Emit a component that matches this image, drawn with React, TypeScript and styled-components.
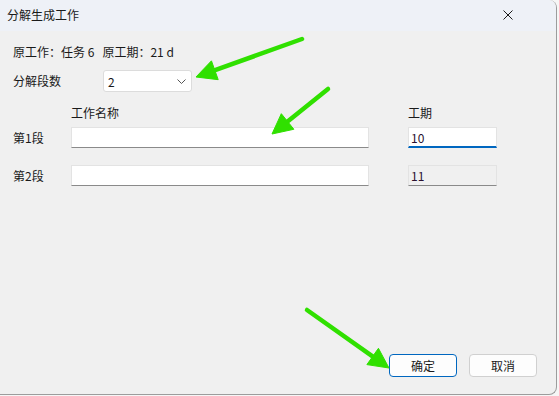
import styled, { createGlobalStyle } from 'styled-components';

const GlobalStyle = createGlobalStyle`
  html, body {
    margin: 0;
    padding: 0;
    background: #f6f6f6;
  }
  body {
    font-family: "Noto Sans CJK SC", "Noto Sans", sans-serif;
    font-size: 12px;
    color: #1a1a1a;
  }
`;

const StyledWindow = styled.div`
  position: relative;
  display: flex;
  flex-direction: column;
  width: 557px;
  height: 395px;
  box-sizing: border-box;
  background: #f0f0f0;
  border-right: 1px solid #9c9c9c;
  border-bottom: 1px solid #9c9c9c;
  border-top-right-radius: 8px;
  border-bottom-right-radius: 8px;
  overflow: hidden;
`;

const StyledTitleBar = styled.div`
  display: flex;
  align-items: center;
  justify-content: space-between;
  height: 31px;
  flex-shrink: 0;
  padding: 0 43px 0 7px;
  background: #eef1f7;
`;

const StyledTitle = styled.span`
  line-height: 16px;
  padding-bottom: 2px;
`;

const StyledClose = styled.svg`
  width: 10px;
  height: 10px;
  margin-bottom: 2px;
`;

const StyledBody = styled.div`
  flex: 1;
  display: flex;
  flex-direction: column;
  padding: 13px 19px 17px 13px;
`;

const StyledInfo = styled.div`
  line-height: 16px;
  white-space: pre;
`;

const StyledFieldRow = styled.div`
  display: flex;
  align-items: center;
  margin-top: ${(p: { $gap: number }) => p.$gap}px;
`;

const StyledLabel = styled.span`
  width: ${(p: { $width: number }) => p.$width}px;
  flex-shrink: 0;
  line-height: 16px;
`;

const StyledSelect = styled.div`
  display: flex;
  align-items: center;
  justify-content: space-between;
  box-sizing: border-box;
  width: 89px;
  height: 22px;
  padding: 0 5px 0 4px;
  background: #fff;
  border: 1px solid #dcdcdc;
  border-radius: 3px;
`;

const StyledHeader = styled.span`
  line-height: 16px;
  width: ${(p: { $width: number }) => p.$width}px;
  margin-left: ${(p: { $offset: number }) => p.$offset}px;
`;

const StyledInput = styled.div<{ $width: number; $offset?: number; $focused?: boolean; $readOnly?: boolean }>`
  box-sizing: border-box;
  display: flex;
  align-items: center;
  width: ${(p) => p.$width}px;
  height: 21px;
  margin-left: ${(p) => p.$offset ?? 0}px;
  padding: 0 2px;
  background: ${(p) => (p.$readOnly ? '#f0f0f0' : '#fff')};
  border: 1px solid #e3e3e3;
  border-bottom: ${(p) => (p.$focused ? '2px solid #0067c0' : '1px solid #8a8a8a')};
  color: #2a1030;
`;

const StyledFooter = styled.div`
  display: flex;
  justify-content: flex-end;
  gap: 12px;
  margin-top: auto;
`;

const StyledButton = styled.button<{ $primary?: boolean }>`
  box-sizing: border-box;
  width: 68px;
  height: 23px;
  padding: 0;
  font: inherit;
  color: #1a1a1a;
  background: #fdfdfd;
  border: 1px solid ${(p) => (p.$primary ? '#0067c0' : '#d0d0d0')};
  border-radius: 4px;
`;

const StyledOverlay = styled.svg`
  position: absolute;
  inset: 0;
  width: 557px;
  height: 395px;
  pointer-events: none;
`;

function Arrow({ x1, y1, x2, y2 }: { x1: number; y1: number; x2: number; y2: number }) {
  const dx = x2 - x1;
  const dy = y2 - y1;
  const len = Math.hypot(dx, dy);
  const ux = dx / len;
  const uy = dy / len;
  const bx = x2 - ux * 20;
  const by = y2 - uy * 20;
  const px = -uy * 10;
  const py = ux * 10;
  return (
    <g fill="#30e000" stroke="#30e000">
      <line x1={x1} y1={y1} x2={bx + ux * 2} y2={by + uy * 2} strokeWidth={4.5} strokeLinecap="round" />
      <polygon points={`${x2},${y2} ${bx + px},${by + py} ${bx - px},${by - py}`} strokeWidth={1} strokeLinejoin="round" />
    </g>
  );
}

export default function App() {
  return (
    <>
      <GlobalStyle />
      <StyledWindow>
        <StyledTitleBar>
          <StyledTitle>分解生成工作</StyledTitle>
          <StyledClose viewBox="0 0 10 10">
            <path d="M0.5 0.5 L9.5 9.5 M9.5 0.5 L0.5 9.5" stroke="#1a1a1a" strokeWidth="1" fill="none" />
          </StyledClose>
        </StyledTitleBar>
        <StyledBody>
          <StyledInfo>原工作：任务 6   原工期：21 d</StyledInfo>
          <StyledFieldRow $gap={10}>
            <StyledLabel $width={90}>分解段数</StyledLabel>
            <StyledSelect>
              <span>2</span>
              <svg width="9" height="5" viewBox="0 0 9 5">
                <path d="M0.5 0.5 L4.5 4.5 L8.5 0.5" stroke="#555" strokeWidth="1" fill="none" />
              </svg>
            </StyledSelect>
          </StyledFieldRow>
          <StyledFieldRow $gap={13}>
            <StyledHeader $width={298} $offset={58}>工作名称</StyledHeader>
            <StyledHeader $width={89} $offset={39}>工期</StyledHeader>
          </StyledFieldRow>
          <StyledFieldRow $gap={6}>
            <StyledLabel $width={58}>第1段</StyledLabel>
            <StyledInput $width={298} />
            <StyledInput $width={89} $offset={39} $focused>10</StyledInput>
          </StyledFieldRow>
          <StyledFieldRow $gap={17}>
            <StyledLabel $width={58}>第2段</StyledLabel>
            <StyledInput $width={298} />
            <StyledInput $width={89} $offset={39} $readOnly>11</StyledInput>
          </StyledFieldRow>
          <StyledFooter>
            <StyledButton $primary>确定</StyledButton>
            <StyledButton>取消</StyledButton>
          </StyledFooter>
        </StyledBody>
        <StyledOverlay viewBox="0 0 557 395">
          <Arrow x1={302} y1={39} x2={196} y2={77} />
          <Arrow x1={328} y1={89} x2={272} y2={134} />
          <Arrow x1={307} y1={310} x2={389} y2={368} />
        </StyledOverlay>
      </StyledWindow>
    </>
  );
}
